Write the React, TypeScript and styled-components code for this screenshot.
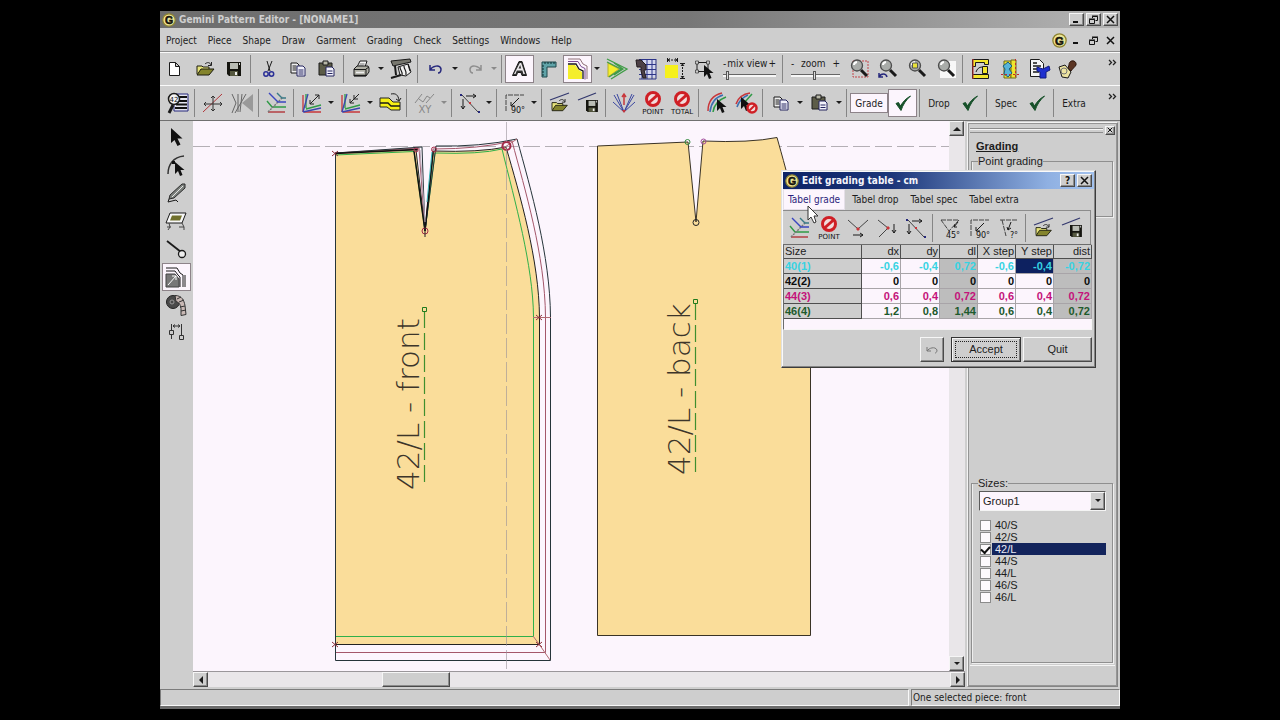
import React from 'react';
import styled, { createGlobalStyle, css } from 'styled-components';

const UI = '"DejaVu Sans Condensed", "DejaVu Sans", sans-serif';
const SANS = '"Liberation Sans", Arial, sans-serif';
const FACE = '#cecece';
const PAPER = '#fcf5fd';

const GlobalStyle = createGlobalStyle`
  * { box-sizing: border-box; }
  body { margin: 0; background: #000; }
  button, select, input { font: inherit; color: inherit; margin: 0; padding: 0; }
`;

const raised = css`
  border: 1px solid;
  border-color: #f6f6f6 #4a4a4a #4a4a4a #f6f6f6;
  box-shadow: inset -1px -1px 0 #8c8c8c;
`;

const Screen = styled.div`
  min-height: 100vh;
  display: flex;
  flex-direction: column;
  align-items: center;
  padding: 11px 0;
  background: #000;
`;
const Frame = styled.div`
  width: 75%;
  flex: 1;
  display: flex;
  flex-direction: column;
  background: ${FACE};
  color: #1c1c1c;
  font-family: ${UI};
  font-size: 10px;
  border-bottom: 3px solid #6c6c6c;
`;
const TitleBar = styled.header<{ $active?: boolean }>`
  height: 17px;
  display: flex;
  align-items: center;
  gap: 2px;
  padding: 0 2px;
  flex: none;
  color: ${p => (p.$active ? '#f4f4fa' : '#cfcfcf')};
  background: ${p =>
    p.$active
      ? 'linear-gradient(90deg, #0d2366 0%, #1c3679 35%, #8fb0e2 85%, #a3c2ee 100%)'
      : 'linear-gradient(90deg, #6e6e6e 0%, #777 55%, #b4b4b4 100%)'};
`;
const TitleText = styled.h1`
  margin: 0;
  padding-left: 1px;
  flex: 1;
  font: bold 10px/16px ${UI};
  white-space: nowrap;
`;
const BoxButton = styled.button`
  width: 15px;
  height: 13px;
  display: grid;
  place-items: center;
  background: ${FACE};
  color: #111;
  ${raised}
`;
const FlatButton = styled.button`
  width: 15px;
  height: 13px;
  display: grid;
  place-items: center;
  background: none;
  border: 0;
`;
const MenuBar = styled.nav`
  height: 24px;
  flex: none;
  display: flex;
  align-items: center;
  padding: 2px 2px 0 6px;
  gap: 11px;
  border-bottom: 1px solid #8e8e8e;
`;
const MenuButton = styled.button`
  background: none;
  border: 0;
  line-height: 16px;
`;
const DocControls = styled.div`
  margin-left: auto;
  display: flex;
  align-items: center;
  gap: 2px;
`;
const Bar = styled.div<{ $h: number; $indent?: number }>`
  height: ${p => p.$h}px;
  flex: none;
  display: flex;
  align-items: center;
  overflow: hidden;
  padding-left: ${p => p.$indent ?? 0}px;
  border-top: 1px solid #fafafa;
`;
const Tool = styled.button<{ $on?: boolean }>`
  width: 29px;
  height: 28px;
  flex: none;
  display: grid;
  place-items: center;
  background: ${p => (p.$on ? PAPER : 'none')};
  border: 1px solid ${p => (p.$on ? '#8d8389' : 'transparent')};
`;
const Drop = styled.button`
  width: 10px;
  height: 28px;
  flex: none;
  display: grid;
  place-items: center;
  background: none;
  border: 0;
  &:disabled { color: #8a8a8a; }
`;
const Sep = styled.span`
  width: 1px;
  height: 28px;
  margin: 0 3px 0 2px;
  flex: none;
  background: #858585;
`;
const ModeButton = styled.button<{ $on?: boolean; $w: number }>`
  width: ${p => p.$w}px;
  height: 20px;
  flex: none;
  text-align: center;
  background: ${p => (p.$on ? PAPER : 'none')};
  border: 1px solid ${p => (p.$on ? '#8d8389' : 'transparent')};
`;
const Overflow = styled.button`
  margin: 0 3px 14px auto;
  width: 9px;
  height: 9px;
  display: grid;
  place-items: center;
  background: none;
  border: 0;
`;
const SliderBox = styled.label<{ $w: number }>`
  width: ${p => p.$w}px;
  flex: none;
  display: flex;
  flex-direction: column;
  padding: 0 4px 0 5px;
  font-size: 10px;
  line-height: 12px;
`;
const SliderCaption = styled.span`
  display: flex;
  justify-content: space-between;
  white-space: nowrap;
`;
const Range = styled.input`
  appearance: none;
  width: 100%;
  height: 10px;
  background: linear-gradient(#666 0 1px, #f7f7f7 1px 3px, transparent 3px) 0 4px / 100% 5px no-repeat;
  &::-webkit-slider-thumb {
    appearance: none;
    width: 3px;
    height: 9px;
    background: #ddd;
    border: 1px solid #555;
  }
`;

const Work = styled.div`
  position: relative;
  flex: 1;
  display: flex;
  min-height: 0;
  border-top: 1px solid #707070;
`;
const Palette = styled.aside`
  width: 33px;
  flex: none;
  display: flex;
  flex-direction: column;
  align-items: center;
  padding: 2px 1px 0 0;
`;
const Desk = styled.main`
  flex: 1;
  min-width: 0;
  display: flex;
  flex-direction: column;
`;
const DeskRow = styled.div`
  flex: 1;
  min-height: 0;
  display: flex;
`;
const Paper = styled.svg`
  flex: 1;
  min-width: 0;
  height: 100%;
  display: block;
  background: ${PAPER};
`;
const VTrack = styled.div`
  width: 16px;
  flex: none;
  display: flex;
  flex-direction: column;
  justify-content: space-between;
  background: #e9e6e9;
`;
const HTrack = styled.div`
  height: 16px;
  flex: none;
  display: flex;
  justify-content: space-between;
  border-top: 1px solid #9a969a;
  background: #e9e6e9;
`;
const ScrollButton = styled.button`
  width: 15px;
  height: 15px;
  flex: none;
  display: grid;
  place-items: center;
  background: ${FACE};
  ${raised}
`;
const Thumb = styled.div`
  width: 68px;
  height: 15px;
  flex: none;
  background: ${FACE};
  ${raised}
`;
const Spring = styled.span<{ $grow: number }>`
  flex: ${p => p.$grow};
`;

const Side = styled.aside`
  width: 151px;
  margin: 1px 2px 0 2px;
  flex: none;
  display: flex;
  flex-direction: column;
  border: 1px solid #f4f4f4;
  border-right-color: #858585;
  border-bottom-color: #858585;
  outline: 1px solid #959595;
  outline-offset: -2px;
  padding: 2px;
  font-family: ${SANS};
  font-size: 11px;
`;
const GripRow = styled.div`
  display: flex;
  align-items: center;
  gap: 2px;
  height: 10px;
`;
const Grip = styled.span`
  flex: 1;
  height: 5px;
  border-top: 1px solid #8c8c8c;
  border-bottom: 1px solid #8c8c8c;
  box-shadow: inset 0 1px 0 #f5f5f5;
`;
const TinyClose = styled.button`
  width: 10px;
  height: 9px;
  display: grid;
  place-items: center;
  background: ${FACE};
  ${raised}
`;
const SideTitle = styled.h2`
  margin: 4px 0 2px 6px;
  font: bold 11px/14px ${SANS};
  text-decoration: underline;
`;
const Group = styled.fieldset<{ $h: number }>`
  margin: 0 2px 0 1px;
  min-width: 0;
  min-height: ${p => p.$h}px;
  padding: 1px 6px 0 7px;
  border: 1px solid #8f8f8f;
  box-shadow: inset 1px 0 0 #eee, 1px 1px 0 #eee;
`;
const Legend = styled.legend`
  margin-left: -1px;
  padding: 0;
  line-height: 13px;
`;
const Combo = styled.div`
  height: 20px;
  display: flex;
  background: ${PAPER};
  border: 1px solid;
  border-color: #5a5a5a #f4f4f4 #f4f4f4 #5a5a5a;
`;
const ComboSelect = styled.select`
  appearance: none;
  flex: 1;
  min-width: 0;
  padding-left: 3px;
  border: 0;
  background: none;
`;
const ComboArrow = styled.span`
  width: 15px;
  display: grid;
  place-items: center;
  background: ${FACE};
  pointer-events: none;
  ${raised}
`;
const SizeList = styled.ul`
  list-style: none;
  margin: 8px 0 0;
  padding: 0 0 0 1px;
`;
const SizeRow = styled.label<{ $on?: boolean }>`
  display: flex;
  align-items: center;
  gap: 1px;
  height: 12px;
  span {
    flex: 1;
    padding-left: 3px;
    line-height: 12px;
    color: ${p => (p.$on ? '#e8e8f4' : 'inherit')};
    background: ${p => (p.$on ? '#13245c' : 'none')};
  }
`;
const Check = styled.input`
  appearance: none;
  width: 11px;
  height: 11px;
  display: grid;
  place-items: center;
  background: #fdfafd;
  border: 1px solid #8b8b8b;
  &:checked::after {
    content: '';
    width: 7px;
    height: 4px;
    border: solid #111;
    border-width: 0 0 2px 2px;
    transform: rotate(-48deg);
  }
`;
const SideFoot = styled.div`
  height: 19px;
  margin-top: 2px;
  border-top: 1px solid #f4f4f4;
`;

const StatusBar = styled.footer`
  height: 19px;
  flex: none;
  display: flex;
  gap: 2px;
  padding-top: 2px;
`;
const StatusCell = styled.div<{ $w?: number }>`
  ${p => (p.$w ? `width: ${p.$w}px; flex: none;` : 'flex: 1;')}
  padding-left: 1px;
  line-height: 15px;
  border: 1px solid;
  border-color: #7c7c7c #f8f8f8 #f8f8f8 #7c7c7c;
`;

const Dialog = styled.section`
  position: absolute;
  top: 49px;
  right: 24px;
  width: 315px;
  padding: 1px;
  background: ${FACE};
  border: 1px solid;
  border-color: #e0e0e0 #3c3c3c #3c3c3c #e0e0e0;
  box-shadow: inset -1px -1px 0 #858585, inset 1px 1px 0 #fafafa;
`;
const Tabs = styled.div`
  height: 21px;
  display: flex;
  gap: 2px;
`;
const Tab = styled.button<{ $on?: boolean }>`
  padding: 0 4px;
  background: ${p => (p.$on ? PAPER : 'none')};
  color: ${p => (p.$on ? '#2b1f7c' : 'inherit')};
  border: 1px solid ${p => (p.$on ? '#e5dfe8' : 'transparent')};
`;
const DialogBar = styled.div`
  height: 34px;
  display: flex;
  align-items: center;
  padding-left: 2px;
  margin-right: 3px;
  border-top: 1px solid #8c8c8c;
  border-right: 1px solid #8c8c8c;
`;
const TableBox = styled.div`
  height: 86px;
  margin: 0 2px 0 0;
  background: ${PAPER};
  border: 1px solid;
  border-color: #6c6c6c #f6f6f6 #f6f6f6 #6c6c6c;
`;
const Grid = styled.table`
  width: 308px;
  table-layout: fixed;
  border-collapse: separate;
  border-spacing: 0;
  font: 11px/13px ${SANS};
`;
const Th = styled.th<{ $w?: number }>`
  width: ${p => (p.$w ? `${p.$w}px` : 'auto')};
  height: 14px;
  padding: 0 1px;
  font-weight: normal;
  text-align: right;
  white-space: nowrap;
  background: ${FACE};
  border: solid #4e4e4e;
  border-width: 0 1px 1px 0;
  &:first-child { text-align: left; }
`;
const RowHead = styled.th<{ $c: string }>`
  height: 15px;
  padding: 0 1px;
  text-align: left;
  color: ${p => p.$c};
  background: ${FACE};
  border: solid #4e4e4e;
  border-width: 0 1px 1px 0;
`;
const Td = styled.td<{ $c: string; $kind?: 'calc' | 'sel' }>`
  height: 15px;
  padding: 0 1px;
  text-align: right;
  font-weight: bold;
  color: ${p => p.$c};
  background: ${p => (p.$kind === 'calc' ? '#bdbdbd' : p.$kind === 'sel' ? '#0d2160' : PAPER)};
  border: solid #a8a4a8;
  border-width: 0 1px 1px 0;
`;
const Actions = styled.div`
  display: flex;
  justify-content: flex-end;
  gap: 2px;
  padding: 7px 2px 4px;
  font: 11px/13px ${SANS};
`;
const PushButton = styled.button<{ $w: number; $gap?: boolean; $default?: boolean }>`
  width: ${p => p.$w}px;
  height: 25px;
  margin-right: ${p => (p.$gap ? 5 : 0)}px;
  display: grid;
  place-items: center;
  background: ${FACE};
  ${raised}
  ${p => p.$default && css`
    border-color: #333;
    box-shadow: inset 1px 1px 0 #f6f6f6, inset -1px -1px 0 #777;
    outline: 1px dotted #222;
    outline-offset: -5px;
  `}
`;
const Pointer = styled.svg`
  position: absolute;
  left: 25px;
  top: 34px;
`;

/* ---------- drawings ---------- */

const Arrow = ({ d = 'down' }: { d?: 'down' | 'up' | 'left' | 'right' }) => {
  const paths = { down: 'M1 2h6L4 5z', up: 'M0 6h8L4 2z', left: 'M6 0v8L2 4z', right: 'M2 0v8l4-4z' };
  return <svg width="8" height="8" viewBox="0 0 8 8"><path d={paths[d]} fill="currentColor" /></svg>;
};
const Logo = ({ size = 14 }: { size?: number }) => (
  <svg width={size} height={size} viewBox="0 0 14 14">
    <circle cx="7" cy="7" r="6.2" fill="#ece495" stroke="#8d8230" strokeWidth="1.2" />
    <text x="7" y="10.800" fontSize="10.500" fontWeight="bold" fontFamily="Liberation Sans, sans-serif" textAnchor="middle" fill="#14120a" stroke="#14120a" strokeWidth=".5">G</text>
  </svg>
);
const Min = () => <svg width="9" height="9"><path d="M1 7h5" stroke="#111" strokeWidth="2" /></svg>;
const Restore = () => (
  <svg width="9" height="9" fill="none" stroke="#111"><path d="M3.500 3V1.500h5v4H6.500M3 1h6M.5 4.500h5v4h-5zM0 4h6" /></svg>
);
const Close = ({ s = 9 }: { s?: number }) => (
  <svg width={s} height={s} viewBox="0 0 9 9"><path d="M1 1l7 7M8 1L1 8" stroke="#111" strokeWidth="1.5" /></svg>
);
const Chevrons = () => (
  <svg width="9" height="7" fill="none" stroke="#222" strokeWidth="1.3"><path d="M1 1l2.5 2.5L1 6M5 1l2.5 2.5L5 6" /></svg>
);

const Label = ({ x, y, children, size = 7, fill = '#111' }: { x: number; y: number; children: string; size?: number; fill?: string }) => (
  <text x={x} y={y} fontSize={size} fill={fill} stroke="none" fontFamily="DejaVu Sans, sans-serif" textAnchor="middle">{children}</text>
);
const floppy = (x: number, y: number, s: number) => (
  <g transform={`translate(${x} ${y}) scale(${s})`} stroke="none">
    <path d="M0 0h14v14H2l-2-2z" fill="#15150f" /><path d="M3 1h8v6H3z" fill="#b9bcb4" />
    <path d="M3 9h8v5H3z" fill="#55583f" /><path d="M8 10h2v3H8z" fill="#eee" /><path d="M12 1h1v2h-1z" fill="#ddd" />
  </g>
);
const folder = (x: number, y: number, s: number) => (
  <g transform={`translate(${x} ${y}) scale(${s})`} strokeWidth="1">
    <path d="M0 12V4h5l1 1h6v3" fill="#e6e37a" stroke="#1d1d10" /><path d="M0 13l4-6h13l-5 6z" fill="#84842c" stroke="#1d1d10" />
    <path d="M8 2c2-2 5-2 6 1M14.5 0v3.5H11" fill="none" stroke="#222" />
  </g>
);
const forbid = (
  <g><circle cx="12" cy="8" r="6.500" fill="#f2dcdc" stroke="#cf1f25" strokeWidth="3" /><path d="M7.500 12l9-8" stroke="#cf1f25" strokeWidth="3" /></g>
);
const lens = (
  <g><path d="M14 13l6 6" stroke="#1a1a1a" strokeWidth="3" /><circle cx="10" cy="8.500" r="5.500" fill="#a9aca9" stroke="#4d4d4d" strokeWidth="1.300" /><path d="M7 8q0-2.500 3-3" stroke="#fff" strokeWidth="2" /></g>
);
const pointer = (x: number, y: number) => (
  <path transform={`translate(${x} ${y})`} d="M0 0v12l3-3 2 5 2.500-1-2-5h4z" fill="#111" stroke="none" />
);
const multi = (
  <g strokeWidth="1.300">
    <path d="M3 21V4M4 21h17" stroke="#c8373b" /><path d="M6 17V3M6 18l15-4" stroke="#2f9a46" /><path d="M3 21L8 3M3 21l18-4" stroke="#3a46b0" />
  </g>
);

const icons: Record<string, React.ReactNode> = {
  new: <path d="M5.500 5.500h6l4 4v9h-10zM11.500 5.500v4h4" fill="#fff" />,
  open: folder(4, 5, 1),
  save: floppy(5, 5, 1),
  cut: <g><path d="M10 4l3 10M15 4l-4 10" /><circle cx="9" cy="17" r="2.200" stroke="#2a2f96" strokeWidth="1.500" /><circle cx="14.500" cy="17" r="2.200" stroke="#2a2f96" strokeWidth="1.500" /></g>,
  copy: <g><path d="M5 6h6l2 2v8H5z" fill="#eee" /><path d="M6.500 9h4M6.500 11h4M6.500 13h4" /><path d="M11 9h6l2 2v8h-8z" fill="#f2f2fb" stroke="#24245f" /><path d="M12.500 13h5M12.500 15h5M12.500 17h5" stroke="#24245f" /></g>,
  paste: <g><path d="M4 6h13v12H4z" fill="#5c5c48" /><path d="M8 4h5v4H8z" fill="#b8b8a8" /><path d="M11 10h6l2 2v7h-8z" fill="#f2f2fb" stroke="#24245f" /><path d="M12.500 14h5M12.500 16.500h5" stroke="#24245f" /></g>,
  print: <g><path d="M7 10l3-6h7l-2 6z" fill="#f4f4f4" /><path d="M9.500 7h5M8.500 9h5" stroke="#777" /><path d="M4 12l3-3h11l1 2v4l-3 4H4z" fill="#b0b0a6" /><path d="M4 12.500h12v6M16 12l3-2" /><path d="M6 15.500h8" stroke="#eee" strokeWidth="1.500" /><path d="M4 18.500h12" strokeWidth="1.500" /></g>,
  plot: <g><path d="M2 4l19-2 1 3-18 4z" fill="#77776e" /><path d="M9 10l10-3 3 8-5 4-6-1z" fill="#f1f1f1" /><path d="M6 9l1 9M2 21l10-3" strokeWidth="2" /><path d="M11 10c0 4 3 4 2 8M15 9c0 4 3 4 2 9M19 7l2 7" strokeWidth="1.200" /></g>,
  undo: <path d="M6 8v5h5M6 13c2-4 10-6 11-1 0 2-1 4-3 4" stroke="#26287c" strokeWidth="1.500" />,
  redo: <path d="M18 8v5h-5M18 13c-2-4-10-6-11-1 0 2 1 4 3 4" stroke="#8e8e8e" strokeWidth="1.500" />,
  letter: <g><path d="M4.500 18.500L11 4.500h3l4.500 14h-4.500l-1-3H9.500l-1 3z" fill="#333" /><path d="M6 17L11.800 6h1.400l3.800 11h-1.600l-1-3.500H8.800L7.500 17z" fill="#eeeaee" stroke="none" /><path d="M10.500 11.500l1.700-3.500 1 3.500z" fill="#333" stroke="none" /></g>,
  ruler: <g><path d="M5 5h14v5h-9v10H5z" fill="#5fa3a8" stroke="#20484c" /><path d="M8 5v2M11 5v2M14 5v2M17 5v2M5 9h2M5 12h2M5 15h2M5 18h2" stroke="#0f2e30" /></g>,
  grade: <g><path d="M2 8h7l4 5 3 2v7H2z" fill="#f4ee2c" stroke="none" /><path d="M2 7h8l3 5 4 2v8" strokeWidth="1.300" /><path d="M2 4.500h10l3 5 4 2v11" stroke="#7b4a92" /><path d="M2 2h12l3 5 4 2v13" stroke="#8f7078" /></g>,
  fold: <g><path d="M3 6l11 6-11 8z" fill="#f4ee2c" stroke="#b8b02a" /><path d="M2 2l20 10L6 22M2 5l14 7L4 20M9 6l9 6-9 6" stroke="#3f9c46" strokeWidth="1.300" /></g>,
  gridman: <g><path d="M6 3h15v17H6z" fill="#d3d6ee" stroke="none" /><path d="M5 2.500h17M5 7.500h17M5 12.500h17M5 17.500h17M5 22h17M8 2v20M13 2v20M18 2v20M22 2v20" stroke="#2c3488" /><path d="M2 3h5l5 5v5h-2l2 8h-3l-2-7v-4H3z" fill="#4c4046" stroke="#221b1e" /></g>,
  dims: <g><path d="M2 8h13v13H2z" fill="#f6f01c" stroke="none" /><path d="M4.500 1v4M14.500 1v4M7 1.500L5 3l2 1.500M12 1.500L14 3l-2 1.500M17 6.500h5M17 21.500h5M18 9l1.500-2L21 9M18 19l1.500 2 1.500-2" /><path d="M5 3h9M19.500 7v14" strokeDasharray="2 1" /></g>,
  select: <g><path d="M5 5.500h11v9H5z" /><path d="M3.500 4h3v3h-3zM14.500 4h3v3h-3zM3.500 13h3v3h-3z" fill="#ccc" strokeWidth=".6" />{pointer(12, 8)}</g>,
  zoomRect: <g><path d="M6 4h15v16H6z" stroke="#c4464a" strokeDasharray="2 1" />{lens}</g>,
  zoomBack: <g>{lens}<path d="M3 16v4h4M3 20c2-4 7-4 8 0" stroke="#26287c" strokeWidth="1.500" /></g>,
  zoomFit: <g>{lens}<path d="M7.500 6h5v5h-5z" fill="#e9e33a" stroke="#555" /></g>,
  zoomPage: <g><path d="M6 4h16v17H6z" fill="#f8f8f8" stroke="none" />{lens}</g>,
  machine: <g><path d="M3.500 2.500h16v5h-4v-2h-9v4h-3zM3.500 17.500h16v4h-16z" fill="#f3e72d" /><path d="M13.500 9.500h5v7h-5z" fill="#f3e72d" /><path d="M3.500 9.500v8M7 15c1-3 3-5 6-5" /><path d="M4 2v20" stroke="#c12b2f" /></g>,
  mirror: <g><path d="M6 4h7v17H6z" fill="#efe42e" stroke="#6f6a1a" /><path d="M13 3h5v18h-5z" fill="#efe42e" stroke="#6f6a1a" /><path d="M10 5l4 4-3 3 3 4-4 4-4-3 1-5-2-3z" fill="#58b4d8" stroke="#1e5d7a" /><path d="M17.500 2v20M3 17.500h19" stroke="#c12b2f" strokeDasharray="2 2" /></g>,
  report: <g><path d="M3.500 2.500h9l4 4v13h-13z" fill="#f5f5f5" /><path d="M6 6h4M6 9h8M6 12h6M6 15h6" strokeWidth="1.500" /><path d="M10 10l6 2 6-3 1 4-4 2v6h-6v-6l-3-1z" fill="#1f2fd0" stroke="#111b80" /></g>,
  stamp: <g><path d="M13 8c0-6 8-5 7 0-1 2-3 3-5 6l-3-3z" fill="#5b3524" stroke="#2e170e" /><path d="M3 10l6-2 6 7-3 6-6-1z" fill="#ece3a0" /><circle cx="8" cy="14" r="3" stroke="#777" /></g>,
  tableSearch: <g><path d="M8 3h14v17H8z" fill="#e4e4ee" stroke="#26287c" /><path d="M12 6h9M12 10h9M10 13.500h11M9 17h12" stroke="#111" strokeWidth="1.800" /><circle cx="8" cy="8" r="5.500" fill="#f4f4f4" strokeWidth="1.500" /><path d="M7 14l-4 8" strokeWidth="3" /><Label x={8} y={11}>42</Label></g>,
  moveXY: <g><path d="M2 21L21 3" stroke="#b2363a" /><path d="M3 13h18M12 5v15M5 11l-2 2 2 2M19 11l2 2-2 2M10 7l2-2 2 2M10 18l2 2 2-2" stroke="#333" /></g>,
  mirrorGray: <g stroke="#666"><path d="M12 12l11-9v18z" fill="#999" stroke="none" /><path d="M2 3l4 9-4 10M8 3v18M5 22l11-19M12 3l-2 18" /></g>,
  cascade: <g strokeWidth="1.400"><path d="M2 10l5 6h14" stroke="#2f9a46" /><path d="M3 21h17" stroke="#b2363a" /><path d="M3 21L18 6" stroke="#777" strokeDasharray="2 1" /><path d="M4 2l9 9h8" stroke="#3a46c0" /><path d="M12 2l5 5h4" stroke="#3a7a86" /></g>,
  fanOut: <g>{multi}<path d="M10 13l9-9M15 4h4v4M10 9v4h4" stroke="#222" /></g>,
  fanIn: <g>{multi}<path d="M20 3l-9 9M11 8v4h4M15 4v4h4" stroke="#222" /></g>,
  layers: <g><path d="M2 7h9l4 4h7v8h-9l-4-3H2z" fill="#f6ef16" stroke="#222" /><path d="M2 12h8l3 3h9" strokeWidth="1.300" /><path d="M13 3c5-1 7 1 8 6M23 7l-2 3-3-2" /></g>,
  xyGray: <g stroke="#888"><path d="M2 12l7-9M13 12l8-9M6 8l4 3 4-6 3 2" /><Label x={12} y={22} size={10} fill="#888">XY</Label></g>,
  slopeRight: <g><path d="M4 4l16 17" stroke="#444" /><path d="M8 5h10M15 3l3 2-3 2M5 8v10M3 15l2 3 2-3" /><path d="M2 3h2v2H2zM20 20h2v2h-2z" fill="#26287c" stroke="none" /><path d="M11 11h2v2h-2z" fill="#c8373b" stroke="none" /></g>,
  ang90: <g><path d="M3 20V4h18" strokeDasharray="5 1" stroke="#444" /><path d="M8 15l8-8M8 11v4h4" /><Label x={15} y={22} size={8}>90°</Label></g>,
  openLine: <g><path d="M2 9L21 2" stroke="#33386e" strokeWidth="1.300" />{folder(4, 8, 0.9)}</g>,
  saveLine: <g><path d="M1 9L19 2" stroke="#33386e" strokeWidth="1.300" />{floppy(9, 9, 0.85)}</g>,
  burst: <g stroke="#3a46a0"><path d="M12 21L2 4M12 21L5 3M12 21L20 3M12 21l10-17M12 21L1 11M12 21l11-10" /><path d="M12 14V3M10 6l2-3 2 3" stroke="#c8373b" strokeWidth="1.500" /><path d="M10 19l2 3 2-3z" fill="#c8373b" stroke="none" /></g>,
  point: <g>{forbid}<Label x={12} y={23}>POINT</Label></g>,
  total: <g>{forbid}<Label x={12} y={23}>TOTAL</Label></g>,
  curveSel: <g strokeWidth="1.500"><path d="M3 20C3 9 9 4 17 2" stroke="#c8373b" /><path d="M5 21C6 11 11 6 18 4" stroke="#3c6fb0" /><path d="M8 21C9 13 13 9 21 6" stroke="#2f9a46" />{pointer(12, 8)}</g>,
  curveDel: <g strokeWidth="1.500"><path d="M2 13C4 7 9 3 16 2" stroke="#c8373b" /><path d="M3 16C5 10 9 6 14 4" stroke="#3c6fb0" /><path d="M10 12l8-9" stroke="#2f9a46" />{pointer(7, 6)}<circle cx="18" cy="17" r="4.500" fill="#f2dcdc" stroke="#cf1f25" strokeWidth="2.500" /><path d="M15 20l6-6" stroke="#cf1f25" strokeWidth="2" /></g>,
  check: <path d="M5 12.500l5 7C12 13.500 15 9 19.500 5 15 7.500 12 10.500 9.500 15L7.500 11.500z" fill="#17512a" stroke="#17512a" />,
  vDown: <g><path d="M2 4l10 9 10-9" stroke="#444" /><path d="M7 19h10M14 17l3 2-3 2" /><path d="M11 12h2v2h-2z" fill="#c8373b" stroke="#c8373b" /></g>,
  vRight: <g><path d="M3 4l10 8-9 9" stroke="#444" /><path d="M19 8v9M17 14l2 3 2-3" /><path d="M12 11h2v2h-2z" fill="#c8373b" stroke="#c8373b" /></g>,
  ang45: <g><path d="M2 4h18L10 15z" strokeDasharray="5 1" stroke="#444" /><path d="M19 6l-4 5M16 8l-1 3h3" /><Label x={14} y={22} size={8}>45°</Label></g>,
  angAny: <g><path d="M3 4h17M5 4l4 16" strokeDasharray="5 1" stroke="#444" /><path d="M14 6l-3 8M10 11l1 3 3-2" /><Label x={17} y={22} size={8}>?°</Label></g>,
  arrow: <path d="M7 3v15l3.500-3 3 6 3-1.500-3-6h5z" fill="#111" stroke="none" />,
  node: <g strokeWidth="1.500"><path d="M4 21C4 12 9 4 20 3" stroke="#333" /><path d="M8 8h3v3H8z" fill="#111" stroke="none" />{pointer(11, 9)}</g>,
  marker: <g><path d="M18 3h3v4L10 17l-5 1 1-4z" fill="#7d827e" stroke="#2b2b2b" /><path d="M19 5L8 16" stroke="#e4e4e4" /><path d="M5 18l-1 3 8-2 2 2" /></g>,
  board: <g><path d="M6 4h16l-4 10H2z" fill="#f8f8f8" /><path d="M8 6.500h10l-2 5H6z" fill="#70702c" stroke="none" /><path d="M5 14l1 4-2 3M18 14l2 4v3M3 18h4M15 18h5" stroke="#444" /></g>,
  pin: <g><path d="M3 4l14 11" strokeWidth="1.800" /><circle cx="18" cy="17" r="3.500" fill="#eee" strokeWidth="1.300" /></g>,
  nest: <g><path d="M2 9h9l4 5v8H2z" fill="#777" stroke="#444" /><path d="M2 6h9l3 4 2 2v10M2 3h11l3 5 3 2v12M21 10v12" /><path d="M4 20l8-9M8 11h4v4" stroke="#fff" /></g>,
  tape: <g><circle cx="9" cy="9" r="6.500" fill="#4a4a4a" stroke="#222" /><circle cx="8" cy="9" r="2" stroke="#999" /><path d="M11 2.500c7 0 9 5 10 10l1 9-5 1 0-7c-1-5-2-6-5-7z" fill="#c8b8b4" stroke="#333" /><path d="M16 14l5-1M17 18l5-1M13 6l4-2M15 9l5-2" stroke="#333" /></g>,
  nodesH: <g stroke="#333"><path d="M7.500 3v15M17.500 3v15M9 5h7M11 3.500L9 5l2 1.500M14 3.500L16 5l-2 1.500" /><path d="M5.500 9.500h4v4h-4zM15.500 14.500h4v4h-4z" fill="#ccc" /></g>,
};
const Icon = ({ name }: { name: string }) => (
  <svg width="24" height="24" viewBox="0 0 24 24" fill="none" stroke="#1a1a1a" strokeWidth="1" aria-hidden="true">{icons[name]}</svg>
);

/* "|" is a divider, "v" a drop-down arrow, "x" a greyed one, "*" marks a pressed tool */
const Tools = ({ list }: { list: string }) => (
  <>
    {list.split(' ').map((t, i) => {
      if (t === '|') return <Sep key={i} />;
      if (t === 'v' || t === 'x') return <Drop key={i} disabled={t === 'x'} aria-label="More"><Arrow /></Drop>;
      const name = t.replace('*', '');
      return <Tool key={i} $on={t.endsWith('*')} aria-label={name}><Icon name={name} /></Tool>;
    })}
  </>
);

const Drawing = () => (
  <Paper aria-label="Pattern pieces">
    <g transform="translate(-193 -121)" fill="none" strokeWidth="1">
      <path d="M193 146.500H950" stroke="#b4afb5" strokeDasharray="17 5" />
      <path d="M597.500 146L688 142 696 222 703 141Q750 143 777 137.500C786 170 810 250 810.500 320V635.500H597.500Z" fill="#fadd9a" stroke="#3a3326" />
      <path d="M335.500 153L416 149.500 425 231 433.500 151Q480 152.500 506 147C520 195 539 260 539.500 317V644.500H335.500Z" fill="#fadd9a" stroke="#222" />
      <path d="M335.500 155L414 151.500 425 231 435 153Q480 154.500 502 149C515 202 533 265 533.500 317V636.500H335.500" stroke="#2fb04a" />
      <path d="M335.500 153L419 148 425 231 433 149Q480 149 512 141C525 190 545 255 545.500 317V652.500H335.500V153" stroke="#a4566a" />
      <path d="M335.500 153L422 147 425 231 436 146Q480 147 517 139C531 190 550 255 550.500 317V660.500H335.500V153" stroke="#26343a" />
      <path d="M335 153.500L418 149.500M414 151L425 231 433 151" stroke="#111" strokeWidth="1.500" />
      <path d="M420 150l5 72" stroke="#b5a8b8" /><path d="M432 152l-5 50" stroke="#39b6b8" />
      <path d="M539 644l11 16M502 149l15-10M533 636l6 8M533 317.500h18" stroke="#b06a72" />
      <path d="M332 151l6 5M332 156l6-5M536 315l6 5M536 320l6-5M332 642l6 5M332 647l6-5M536 642l6 5M536 647l6-5" stroke="#8c2f3a" />
      <g stroke="#a32b48"><circle cx="506.500" cy="146" r="4" strokeWidth="2" /><circle cx="434" cy="149.500" r="2.500" /><circle cx="425" cy="231" r="3" /><circle cx="416" cy="150" r="2" /></g>
      <path d="M506.500 122V669" stroke="#98919a" strokeOpacity=".6" strokeDasharray="20 4" />
      <path d="M425 225v12" stroke="#222" />
      <circle cx="687.500" cy="142" r="2.500" stroke="#2f8a3c" /><circle cx="703.500" cy="141.500" r="2.500" stroke="#a04a9a" /><circle cx="696" cy="222.500" r="3" stroke="#222" />
      <path d="M424.500 311V482M695.500 303V472" stroke="#3f8f2e" strokeWidth="1.200" strokeDasharray="17 5" />
      <path d="M422.500 307.500h4v4h-4zM693.500 299.500h4v4h-4z" stroke="#1f7a1c" />
      <g fill="#3c352a" fontFamily="DejaVu Sans Light, DejaVu Sans, sans-serif" fontWeight="200" fontSize="31">
        <text transform="translate(419 490) rotate(-90)">42/L - front</text>
        <text transform="translate(690 475) rotate(-90)">42/L - back</text>
      </g>
    </g>
  </Paper>
);

const COLS: [string, number?][] = [['Size'], ['dx', 39], ['dy', 39], ['dl', 38], ['X step', 38], ['Y step', 38], ['dist', 38]];
const ROWS = [
  { size: '40(1)', color: '#36d3e2', cells: ['-0,6', '-0,4', '0,72', '-0,6', '-0,4', '-0,72'] },
  { size: '42(2)', color: '#0c0c0c', cells: ['0', '0', '0', '0', '0', '0'] },
  { size: '44(3)', color: '#c4127a', cells: ['0,6', '0,4', '0,72', '0,6', '0,4', '0,72'] },
  { size: '46(4)', color: '#1d5a2c', cells: ['1,2', '0,8', '1,44', '0,6', '0,4', '0,72'] },
];
const MENUS = ['Project', 'Piece', 'Shape', 'Draw', 'Garment', 'Grading', 'Check', 'Settings', 'Windows', 'Help'];
const SIZES = ['40/S', '42/S', '42/L', '44/S', '44/L', '46/S', '46/L'];
const PALETTE = ['arrow', 'node', 'marker', 'board', 'pin', 'nest*', 'tape', 'nodesH'];

const GradingDialog = () => (
  <Dialog role="dialog" aria-label="Edit grading table">
    <TitleBar $active>
      <Logo />
      <TitleText as="h2">Edit grading table - cm</TitleText>
      <BoxButton aria-label="Help"><b>?</b></BoxButton>
      <BoxButton aria-label="Close"><Close /></BoxButton>
    </TitleBar>
    <Tabs>
      <Tab $on>Tabel grade</Tab><Tab>Tabel drop</Tab><Tab>Tabel spec</Tab><Tab>Tabel extra</Tab>
    </Tabs>
    <DialogBar><Tools list="cascade point vDown vRight slopeRight | ang45 ang90 angAny | openLine saveLine" /></DialogBar>
    <TableBox>
      <Grid>
        <thead><tr>{COLS.map(([c, w]) => <Th key={c} $w={w}>{c}</Th>)}</tr></thead>
        <tbody>
          {ROWS.map((r, ri) => (
            <tr key={r.size}>
              <RowHead $c={r.color}>{r.size}</RowHead>
              {r.cells.map((v, i) => (
                <Td key={i} $c={r.color} $kind={i === 2 || i === 5 ? 'calc' : ri === 0 && i === 4 ? 'sel' : undefined}>{v}</Td>
              ))}
            </tr>
          ))}
        </tbody>
      </Grid>
    </TableBox>
    <Actions>
      <PushButton $w={24} $gap aria-label="Undo"><svg width="14" height="14" fill="none" stroke="#777"><path d="M2 4v4h4M2 8c2-3 8-5 10-1 0 2-1 3-2 3" /></svg></PushButton>
      <PushButton $w={70} $default>Accept</PushButton>
      <PushButton $w={69}>Quit</PushButton>
    </Actions>
    <Pointer width="12" height="20" viewBox="0 0 12 20"><path d="M1 1v14l3-3 3 6 2-1-2-6h4z" fill="#fff" stroke="#333" /></Pointer>
  </Dialog>
);

export default function App() {
  return (
    <Screen>
      <GlobalStyle />
      <Frame>
        <TitleBar>
          <Logo />
          <TitleText>Gemini Pattern Editor - [NONAME1]</TitleText>
          <BoxButton aria-label="Minimize"><Min /></BoxButton>
          <BoxButton aria-label="Restore"><Restore /></BoxButton>
          <BoxButton aria-label="Close"><Close /></BoxButton>
        </TitleBar>
        <MenuBar>
          {MENUS.map(m => <MenuButton key={m}>{m}</MenuButton>)}
          <DocControls>
            <Logo size={15} />
            <FlatButton aria-label="Minimize document"><Min /></FlatButton>
            <FlatButton aria-label="Restore document"><Restore /></FlatButton>
            <FlatButton aria-label="Close document"><Close /></FlatButton>
          </DocControls>
        </MenuBar>
        <Bar $h={33} $indent={1}>
          <Tools list="new open save | cut copy paste | print v plot | undo v redo x | letter* ruler grade* v fold gridman dims select" />
          <SliderBox $w={62}>
            <SliderCaption><span>-</span><span>mix view</span><span>+</span></SliderCaption>
            <Range type="range" defaultValue={6} />
          </SliderBox>
          <Sep />
          <SliderBox $w={58}>
            <SliderCaption><span>-</span><span>zoom</span><span>+</span></SliderCaption>
            <Range type="range" defaultValue={48} />
          </SliderBox>
          <Tools list="zoomRect zoomBack zoomFit zoomPage | machine mirror report stamp" />
          <Overflow aria-label="More tools"><Chevrons /></Overflow>
        </Bar>
        <Bar $h={35} $indent={3}>
          <Tools list="tableSearch | moveXY mirrorGray | cascade | fanOut v fanIn v layers | xyGray x | slopeRight v | ang90 v | openLine saveLine | burst point total | curveSel curveDel | copy v paste v |" />
          <ModeButton $w={38} $on>Grade</ModeButton>
          <Tools list="check* |" />
          <ModeButton $w={32}>Drop</ModeButton>
          <Tools list="check |" />
          <ModeButton $w={32}>Spec</ModeButton>
          <Tools list="check |" />
          <ModeButton $w={34}>Extra</ModeButton>
          <Overflow aria-label="More modes"><Chevrons /></Overflow>
        </Bar>
        <Work>
          <Palette>
            <Tools list={PALETTE.join(' ')} />
          </Palette>
          <Desk>
            <DeskRow>
              <Drawing />
              <VTrack>
                <ScrollButton aria-label="Scroll up"><Arrow d="up" /></ScrollButton>
                <ScrollButton aria-label="Scroll down"><Arrow /></ScrollButton>
              </VTrack>
            </DeskRow>
            <HTrack>
              <ScrollButton aria-label="Scroll left"><Arrow d="left" /></ScrollButton>
              <Spring $grow={26} />
              <Thumb />
              <Spring $grow={75} />
              <ScrollButton aria-label="Scroll right"><Arrow d="right" /></ScrollButton>
            </HTrack>
          </Desk>
          <Side>
            <GripRow><Grip /><TinyClose aria-label="Close panel"><Close s={6} /></TinyClose></GripRow>
            <SideTitle>Grading</SideTitle>
            <Group $h={62}><Legend>Point grading</Legend></Group>
            <Spring $grow={1} />
            <Group $h={186}>
              <Legend>Sizes:</Legend>
              <Combo>
                <ComboSelect aria-label="Size group" defaultValue="Group1"><option>Group1</option></ComboSelect>
                <ComboArrow><Arrow /></ComboArrow>
              </Combo>
              <SizeList>
                {SIZES.map(s => (
                  <li key={s}>
                    <SizeRow $on={s === '42/L'}><Check type="checkbox" defaultChecked={s === '42/L'} /><span>{s}</span></SizeRow>
                  </li>
                ))}
              </SizeList>
            </Group>
            <SideFoot />
          </Side>
          <GradingDialog />
        </Work>
        <StatusBar>
          <StatusCell />
          <StatusCell $w={209}>One selected piece: front</StatusCell>
        </StatusBar>
      </Frame>
    </Screen>
  );
}
